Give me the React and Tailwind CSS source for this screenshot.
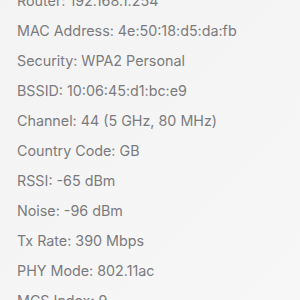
const rows = [
  "Router: 192.168.1.254",
  "MAC Address: 4e:50:18:d5:da:fb",
  "Security: WPA2 Personal",
  "BSSID: 10:06:45:d1:bc:e9",
  "Channel: 44 (5 GHz, 80 MHz)",
  "Country Code: GB",
  "RSSI: -65 dBm",
  "Noise: -96 dBm",
  "Tx Rate: 390 Mbps",
  "PHY Mode: 802.11ac",
  "MCS Index: 9",
];

export default function App() {
  return (
    <div className="w-[300px] h-[300px] overflow-hidden bg-gradient-to-br from-[#f3f3f4] to-[#f7f7f8]">
      <div className="mt-[-14px] pl-[17px] flex flex-col font-['Inter',sans-serif] text-[14.3px] leading-[30px] text-[#7b7b7d]">
        {rows.map((r) => (
          <p key={r} className="whitespace-nowrap">{r}</p>
        ))}
      </div>
    </div>
  );
}
